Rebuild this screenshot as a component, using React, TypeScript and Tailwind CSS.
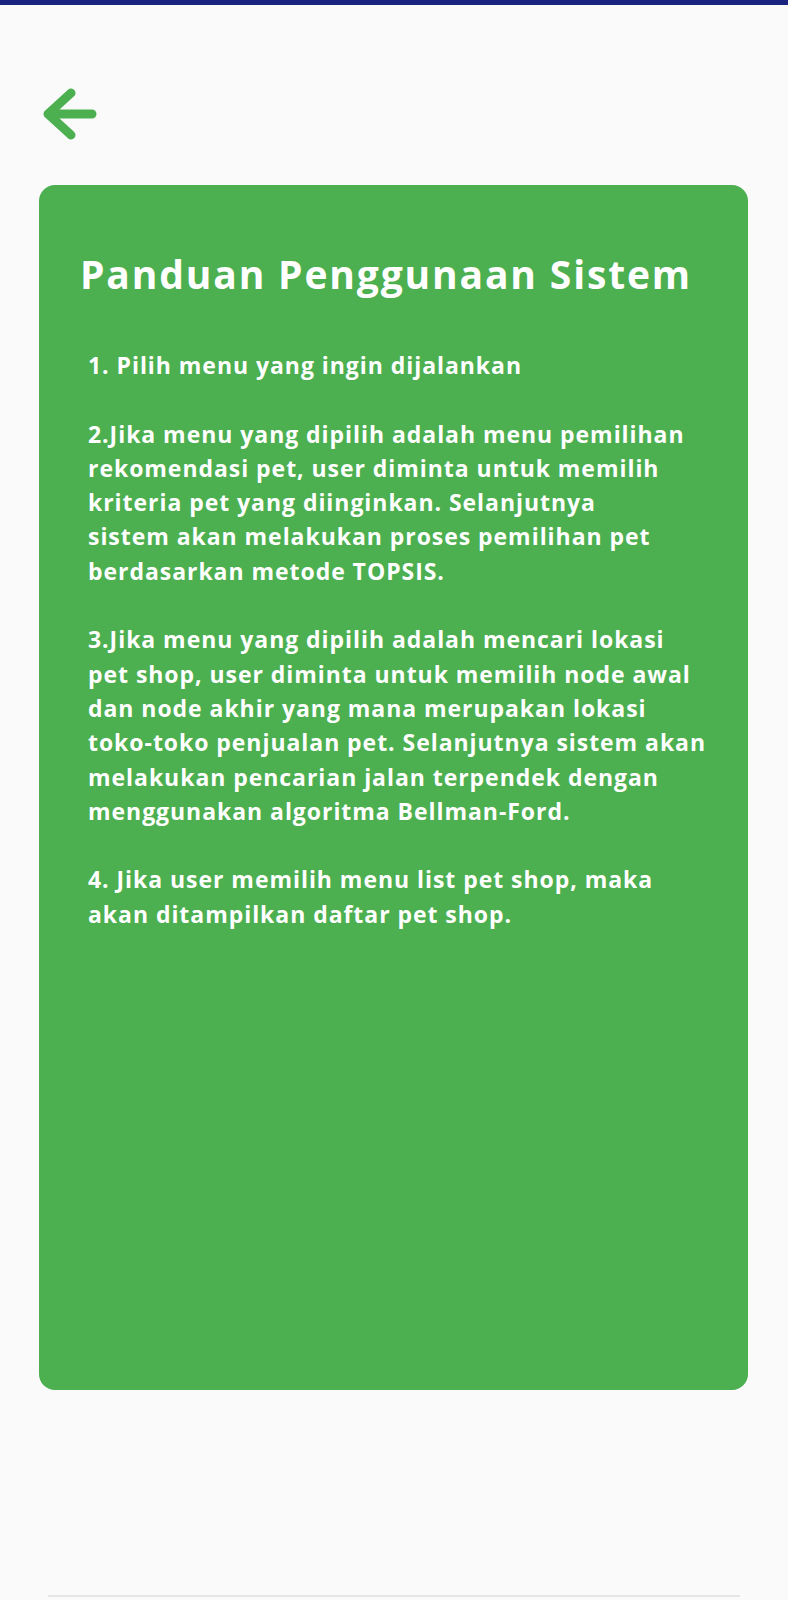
import React from "react";

const lines1 = ["1. Pilih menu yang ingin dijalankan"];
const lines2 = [
  "2.Jika menu yang dipilih adalah menu pemilihan",
  "rekomendasi pet, user diminta untuk memilih",
  "kriteria pet yang diinginkan. Selanjutnya",
  "sistem akan melakukan proses pemilihan pet",
  "berdasarkan metode TOPSIS.",
];
const lines3 = [
  "3.Jika menu yang dipilih adalah mencari lokasi",
  "pet shop, user diminta untuk memilih node awal",
  "dan node akhir yang mana merupakan lokasi",
  "toko-toko penjualan pet. Selanjutnya sistem akan",
  "melakukan pencarian jalan terpendek dengan",
  "menggunakan algoritma Bellman-Ford.",
];
const lines4 = [
  "4. Jika user memilih menu list pet shop, maka",
  "akan ditampilkan daftar pet shop.",
];

function Block({ lines }: { lines: string[] }) {
  return (
    <div>
      {lines.map((l, i) => (
        <div key={i} className="whitespace-nowrap">
          {l}
        </div>
      ))}
    </div>
  );
}

export default function App() {
  return (
    <div
      className="min-h-[1600px] w-[788px] bg-[#fafafa] flex flex-col"
      style={{ fontFamily: '"Open Sans", "Noto Sans", sans-serif' }}
    >
      <div className="h-[5px] bg-[#1a237e]" />
      <div className="ml-[40px] mt-[81px] h-[56px]">
        <svg width="60" height="56" viewBox="0 0 60 56" fill="none">
          <path
            d="M31 7 L8 28 L31 49 M8 28 L52 28"
            stroke="#4caf50"
            strokeWidth="9"
            strokeLinecap="round"
            strokeLinejoin="round"
          />
        </svg>
      </div>
      <div className="ml-[39px] mt-[43px] w-[709px] h-[1205px] rounded-[16px] bg-[#4caf50] pt-[66px] pl-[41px] text-white">
        <div className="text-[39px] leading-[46px] font-bold whitespace-nowrap tracking-[1.85px]">
          Panduan Penggunaan Sistem
        </div>
        <div className="mt-[51px] pl-[8px] text-[23px] leading-[34.3px] font-bold tracking-[0.95px] flex flex-col gap-[34.3px]">
          <Block lines={lines1} />
          <Block lines={lines2} />
          <Block lines={lines3} />
          <Block lines={lines4} />
        </div>
      </div>
      <div className="mt-[205px] mx-[48px] h-[2px] bg-[#e6e6e6]" />
    </div>
  );
}
